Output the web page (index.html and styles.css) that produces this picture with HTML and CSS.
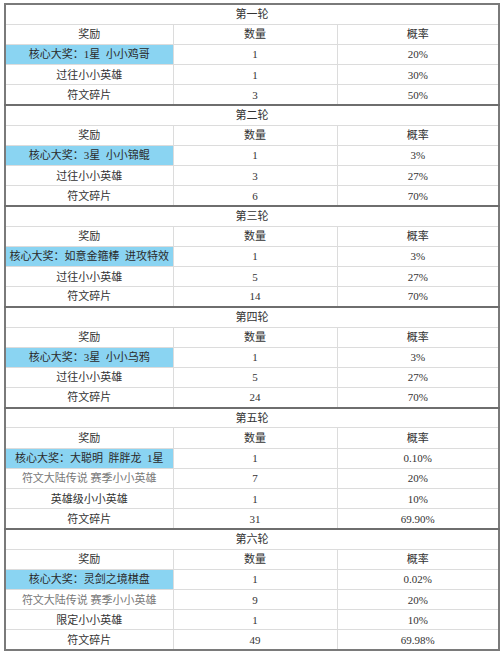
FILE: index.html
```html
<!DOCTYPE html>
<html lang="zh">
<head>
<meta charset="utf-8">
<link rel="stylesheet" href="styles.css">
</head>
<body>
<table class="prize">
  <colgroup><col class="c1"><col class="c2"><col class="c3"></colgroup>
  <tbody>
    <tr class="round first"><td colspan="3">第一轮</td></tr>
    <tr><td>奖励</td><td>数量</td><td>概率</td></tr>
    <tr><td class="hl">核心大奖：1星&nbsp;&nbsp;小小鸡哥</td><td>1</td><td>20%</td></tr>
    <tr><td>过往小小英雄</td><td>1</td><td>30%</td></tr>
    <tr><td>符文碎片</td><td>3</td><td>50%</td></tr>

    <tr class="round"><td colspan="3">第二轮</td></tr>
    <tr><td>奖励</td><td>数量</td><td>概率</td></tr>
    <tr><td class="hl">核心大奖：3星&nbsp;&nbsp;小小锦鲲</td><td>1</td><td>3%</td></tr>
    <tr><td>过往小小英雄</td><td>3</td><td>27%</td></tr>
    <tr><td>符文碎片</td><td>6</td><td>70%</td></tr>

    <tr class="round"><td colspan="3">第三轮</td></tr>
    <tr><td>奖励</td><td>数量</td><td>概率</td></tr>
    <tr><td class="hl">核心大奖：如意金箍棒&nbsp;&nbsp;进攻特效</td><td>1</td><td>3%</td></tr>
    <tr><td>过往小小英雄</td><td>5</td><td>27%</td></tr>
    <tr><td>符文碎片</td><td>14</td><td>70%</td></tr>

    <tr class="round"><td colspan="3">第四轮</td></tr>
    <tr><td>奖励</td><td>数量</td><td>概率</td></tr>
    <tr><td class="hl">核心大奖：3星&nbsp;&nbsp;小小乌鸦</td><td>1</td><td>3%</td></tr>
    <tr><td>过往小小英雄</td><td>5</td><td>27%</td></tr>
    <tr><td>符文碎片</td><td>24</td><td>70%</td></tr>

    <tr class="round"><td colspan="3">第五轮</td></tr>
    <tr><td>奖励</td><td>数量</td><td>概率</td></tr>
    <tr><td class="hl">核心大奖：大聪明&nbsp;&nbsp;胖胖龙&nbsp;&nbsp;1星</td><td>1</td><td>0.10%</td></tr>
    <tr><td class="dim">符文大陆传说 赛季小小英雄</td><td>7</td><td>20%</td></tr>
    <tr><td>英雄级小小英雄</td><td>1</td><td>10%</td></tr>
    <tr><td>符文碎片</td><td>31</td><td>69.90%</td></tr>

    <tr class="round"><td colspan="3">第六轮</td></tr>
    <tr><td>奖励</td><td>数量</td><td>概率</td></tr>
    <tr><td class="hl">核心大奖：灵剑之境棋盘</td><td>1</td><td>0.02%</td></tr>
    <tr><td class="dim">符文大陆传说 赛季小小英雄</td><td>9</td><td>20%</td></tr>
    <tr><td>限定小小英雄</td><td>1</td><td>10%</td></tr>
    <tr><td>符文碎片</td><td>49</td><td>69.98%</td></tr>
  </tbody>
</table>
</body>
</html>
```

FILE: styles.css
```css
html, body {
  margin: 0;
  padding: 0;
  background: #ffffff;
}

body {
  padding: 3px 0 0 4px;
}

.prize {
  width: 494px;
  table-layout: fixed;
  border-collapse: collapse;
  border: 2px solid #7a7a7a;
  font-family: "Liberation Serif", "Noto Sans CJK SC", serif;
  font-size: 11px;
  color: #333333;
}

.c1 { width: 168px; }
.c2 { width: 164px; }
.c3 { width: 162px; }

.prize tr {
  height: 20.2px;
}

.prize td {
  padding: 0;
  text-align: center;
  vertical-align: middle;
  line-height: 14px;
  border: 1px solid #dcdcdc;
  white-space: nowrap;
  overflow: hidden;
}

.prize tr.round td {
  border-top: 2px solid #6e6e6e;
}

.prize tr.round.first td {
  border-top: 2px solid #7a7a7a;
}

.prize td.hl {
  background: #8ad4f2;
  color: #2a2a2a;
}

.prize td.dim {
  color: #777777;
}
```
